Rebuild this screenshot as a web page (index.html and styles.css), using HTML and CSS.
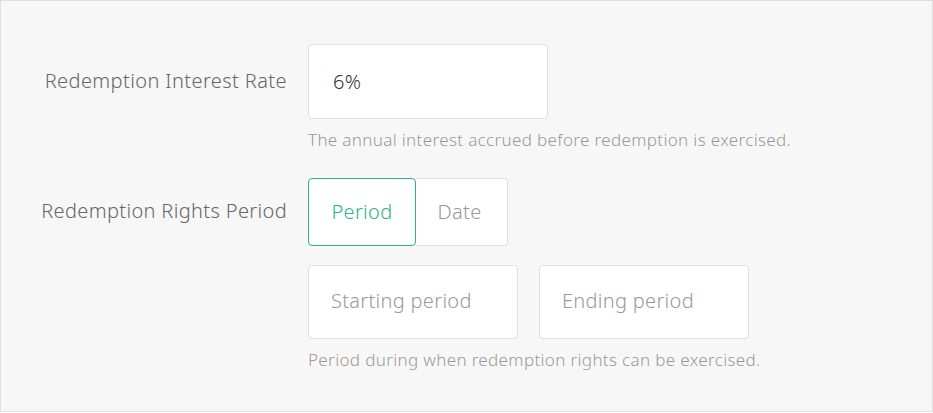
FILE: index.html
```html
<!DOCTYPE html>
<html>
<head>
<meta charset="utf-8">
<link rel="stylesheet" href="styles.css">
</head>
<body>
<div class="panel">
  <div class="row">
    <div class="label">Redemption Interest Rate</div>
    <div class="field">
      <div class="input input-wide"><span class="value">6%</span></div>
      <div class="help">The annual interest accrued before redemption is exercised.</div>
    </div>
  </div>
  <div class="row row-2">
    <div class="label label-toggle">Redemption Rights Period</div>
    <div class="field">
      <div class="toggle">
        <div class="seg seg-active">Period</div>
        <div class="seg seg-right">Date</div>
      </div>
      <div class="pair">
        <div class="input input-half"><span class="placeholder">Starting period</span></div>
        <div class="input input-half"><span class="placeholder">Ending period</span></div>
      </div>
      <div class="help">Period during when redemption rights can be exercised.</div>
    </div>
  </div>
</div>
</body>
</html>
```
FILE: styles.css
```css
html, body {
  margin: 0;
  padding: 0;
  background: #ffffff;
}
body {
  font-family: "Noto Sans", "Open Sans", sans-serif;
  font-weight: 300;
  width: 933px;
  height: 413px;
}
.panel {
  box-sizing: border-box;
  width: 933px;
  height: 412px;
  border: 1px solid #e0e0e0;
  background: #f7f7f7;
  padding-top: 43px;
}
.row {
  display: flex;
  align-items: flex-start;
}
.row-2 {
  margin-top: 28px;
}
.label {
  box-sizing: border-box;
  width: 286px;
  text-align: right;
  font-size: 20px;
  letter-spacing: 0.4px;
  color: #666666;
  height: 74px;
  line-height: 74px;
  margin-right: 21px;
}
.label-toggle {
  height: 67px;
  line-height: 65px;
  letter-spacing: 0.35px;
}
.field {
  display: flex;
  flex-direction: column;
}
.input {
  box-sizing: border-box;
  background: #ffffff;
  border: 1px solid #e0e0e0;
  border-radius: 4px;
  display: flex;
  align-items: center;
  font-size: 20px;
  letter-spacing: 0.3px;
}
.input-wide {
  width: 240px;
  height: 75px;
  padding-left: 24px;
}
.value {
  color: #333333;
}
.help {
  font-size: 17px;
  letter-spacing: 0.35px;
  color: #999999;
  line-height: 20px;
  margin-top: 11px;
}
.toggle {
  display: flex;
}
.seg {
  box-sizing: border-box;
  height: 68px;
  padding-bottom: 2px;
  display: flex;
  align-items: center;
  justify-content: center;
  font-size: 20px;
  letter-spacing: 0.3px;
  color: #999999;
  background: #ffffff;
}
.seg-right {
  width: 92px;
  padding-right: 4px;
  border: 1px solid #e0e0e0;
  border-left: none;
  border-radius: 0 4px 4px 0;
}
.seg-active {
  width: 108px;
  color: #2bb48a;
  border: 1px solid #2bb48a;
  border-radius: 4px;
}
.pair {
  display: flex;
  gap: 21px;
  margin-top: 19px;
}
.input-half {
  width: 210px;
  height: 74px;
  padding-left: 22px;
  padding-bottom: 3px;
}
.placeholder {
  color: #999999;
}
```
